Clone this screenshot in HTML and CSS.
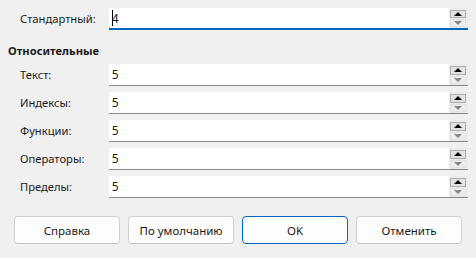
FILE: index.html
```html
<!doctype html>
<html lang="ru">
<head>
    <meta charset="UTF-8">
    <title>Размеры</title>
    <link rel="stylesheet" href="styles.css">
</head>
<body>
<div class="dlg">
    <div class="row">
        <label class="row-label">Стандартный:</label>
        <div class="spin focused">
            <div class="spin-text"><span class="caret"></span>4</div>
            <div class="spin-btns">
                <span class="spin-up"></span>
                <span class="spin-down"></span>
            </div>
        </div>
    </div>

    <div class="group-title">Относительные</div>

    <div class="rows">
        <div class="row">
            <label class="row-label">Текст:</label>
            <div class="spin">
                <div class="spin-text">5</div>
                <div class="spin-btns"><span class="spin-up"></span><span class="spin-down"></span></div>
            </div>
        </div>
        <div class="row">
            <label class="row-label">Индексы:</label>
            <div class="spin">
                <div class="spin-text">5</div>
                <div class="spin-btns"><span class="spin-up"></span><span class="spin-down"></span></div>
            </div>
        </div>
        <div class="row">
            <label class="row-label">Функции:</label>
            <div class="spin">
                <div class="spin-text">5</div>
                <div class="spin-btns"><span class="spin-up"></span><span class="spin-down"></span></div>
            </div>
        </div>
        <div class="row">
            <label class="row-label">Операторы:</label>
            <div class="spin">
                <div class="spin-text">5</div>
                <div class="spin-btns"><span class="spin-up"></span><span class="spin-down"></span></div>
            </div>
        </div>
        <div class="row">
            <label class="row-label">Пределы:</label>
            <div class="spin">
                <div class="spin-text">5</div>
                <div class="spin-btns"><span class="spin-up"></span><span class="spin-down"></span></div>
            </div>
        </div>
    </div>

    <div class="buttons">
        <button class="btn">Справка</button>
        <button class="btn">По умолчанию</button>
        <button class="btn btn-default">OK</button>
        <button class="btn">Отменить</button>
    </div>
</div>
</body>
</html>
```

FILE: styles.css
```css
* {
    margin: 0;
    padding: 0;
    box-sizing: border-box;
}
html, body {
    background: #f0f0f0;
}
body {
    width: 476px;
    height: 258px;
    overflow: hidden;
    font-family: "Noto Sans", "Liberation Sans", sans-serif;
    font-size: 11.2px;
    color: #1b1b1b;
}
.dlg {
    padding: 8px 8px 0 8px;
}
.row {
    display: flex;
    align-items: center;
    height: 22px;
    padding-left: 12px;
}
.row-label {
    width: 89px;
    line-height: 22px;
}
.spin {
    display: flex;
    width: 360px;
    height: 22px;
    border-bottom: 1px solid #868686;
}
.spin.focused {
    border-bottom: 2px solid #0067c0;
}
.spin-text {
    flex: 1;
    background: #fff;
    padding-left: 3px;
    line-height: 21px;
    display: flex;
    align-items: center;
    font-size: 12px;
}
.caret {
    display: inline-block;
    width: 1px;
    height: 16px;
    background: #000;
    margin-right: -1px;
}
.spin-btns {
    width: 19px;
    background: #ebebeb;
    display: flex;
    flex-direction: column;
    align-items: center;
    padding: 2px 2px 1px 1px;
    gap: 1px;
}
.spin-up,
.spin-down {
    width: 16px;
    flex: 1;
    position: relative;
    border: 1px solid #e2e2e2;
    background: #ededed;
}
.spin-up {
    border-color: #adadad;
    background: #e1e1e1;
}
.spin-up::after,
.spin-down::after {
    content: "";
    position: absolute;
    left: 50%;
    top: 50%;
    margin-left: -4px;
    border-left: 4px solid transparent;
    border-right: 4px solid transparent;
}
.spin-up::after {
    margin-top: -2px;
    border-bottom: 4px solid #000;
}
.spin-down::after {
    margin-top: -2px;
    border-top: 4px solid #888;
}
.group-title {
    font-weight: bold;
    line-height: 16px;
    margin: 13px 0 5px 0;
}
.rows {
    display: flex;
    flex-direction: column;
    gap: 6px;
}
.buttons {
    display: flex;
    gap: 8px;
    margin-top: 18px;
    padding-left: 6px;
}
.btn {
    width: 106px;
    height: 28px;
    font-family: inherit;
    font-size: 11.5px;
    color: #1b1b1b;
    background: #fdfdfd;
    border: 1px solid #d0d0d0;
    border-bottom-color: #c4c4c4;
    border-radius: 4px;
}
.btn-default {
    border: 1px solid #0067c0;
}
```
